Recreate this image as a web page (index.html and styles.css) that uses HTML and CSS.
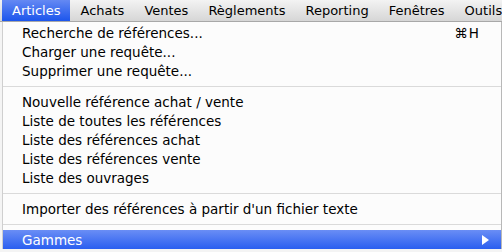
FILE: index.html
```html
<!DOCTYPE html>
<html lang="fr">
<head>
    <meta charset="UTF-8">
    <title>Articles</title>
    <link rel="stylesheet" href="styles.css">
</head>
<body>

    <div class="menubar">
        <span class="menu-title active">Articles</span>
        <span class="menu-title">Achats</span>
        <span class="menu-title">Ventes</span>
        <span class="menu-title">Règlements</span>
        <span class="menu-title">Reporting</span>
        <span class="menu-title">Fenêtres</span>
        <span class="menu-title">Outils</span>
    </div>

    <div class="dropdown">
        <div class="menu-item"><span>Recherche de références...</span><span class="shortcut">⌘H</span></div>
        <div class="menu-item">Charger une requête...</div>
        <div class="menu-item">Supprimer une requête...</div>
        <div class="separator"></div>
        <div class="menu-item">Nouvelle référence achat / vente</div>
        <div class="menu-item">Liste de toutes les références</div>
        <div class="menu-item">Liste des références achat</div>
        <div class="menu-item">Liste des références vente</div>
        <div class="menu-item">Liste des ouvrages</div>
        <div class="separator"></div>
        <div class="menu-item">Importer des références à partir d'un fichier texte</div>
        <div class="separator"></div>
        <div class="menu-item selected">
            <span>Gammes</span>
            <svg class="arrow" width="8" height="10" viewBox="0 0 8 10"><path d="M0 0 L7 5 L0 10 Z" fill="#fff"/></svg>
        </div>
    </div>

</body>
</html>
```

FILE: styles.css
```css
body {
    margin: 0;
    background: #f4f4f4;
    font-family: "DejaVu Sans", sans-serif;
    font-size: 13px;
    color: #000;
    overflow: hidden;
}

.menubar {
    display: flex;
    height: 21px;
    padding-left: 2px;
    background: linear-gradient(#f3f3f3, #d6d6d6);
    border-bottom: 1px solid #a8a8a8;
    white-space: nowrap;
}

.menu-title {
    display: flex;
    align-items: center;
    padding: 0 10px;
}

.menu-title.active {
    background: linear-gradient(#6489f3, #1c55ec);
    color: #fff;
}

.dropdown {
    width: 498px;
    margin-left: 2px;
    padding-top: 1px;
    background: #fcfcfc;
    border-left: 1px solid #cfcfcf;
    border-right: 1px solid #b8b8b8;
    font-size: 13.5px;
}

.menu-item {
    display: flex;
    justify-content: space-between;
    align-items: center;
    height: 19px;
    padding: 0 21px 0 19px;
}

.shortcut {
    letter-spacing: 1px;
}

.menu-item.selected {
    background: linear-gradient(#6a8ef5, #2a5ef0);
    color: #fff;
    padding-right: 11px;
}

.separator {
    height: 1px;
    margin: 6px 0 5px;
    background: #dadada;
}
```
